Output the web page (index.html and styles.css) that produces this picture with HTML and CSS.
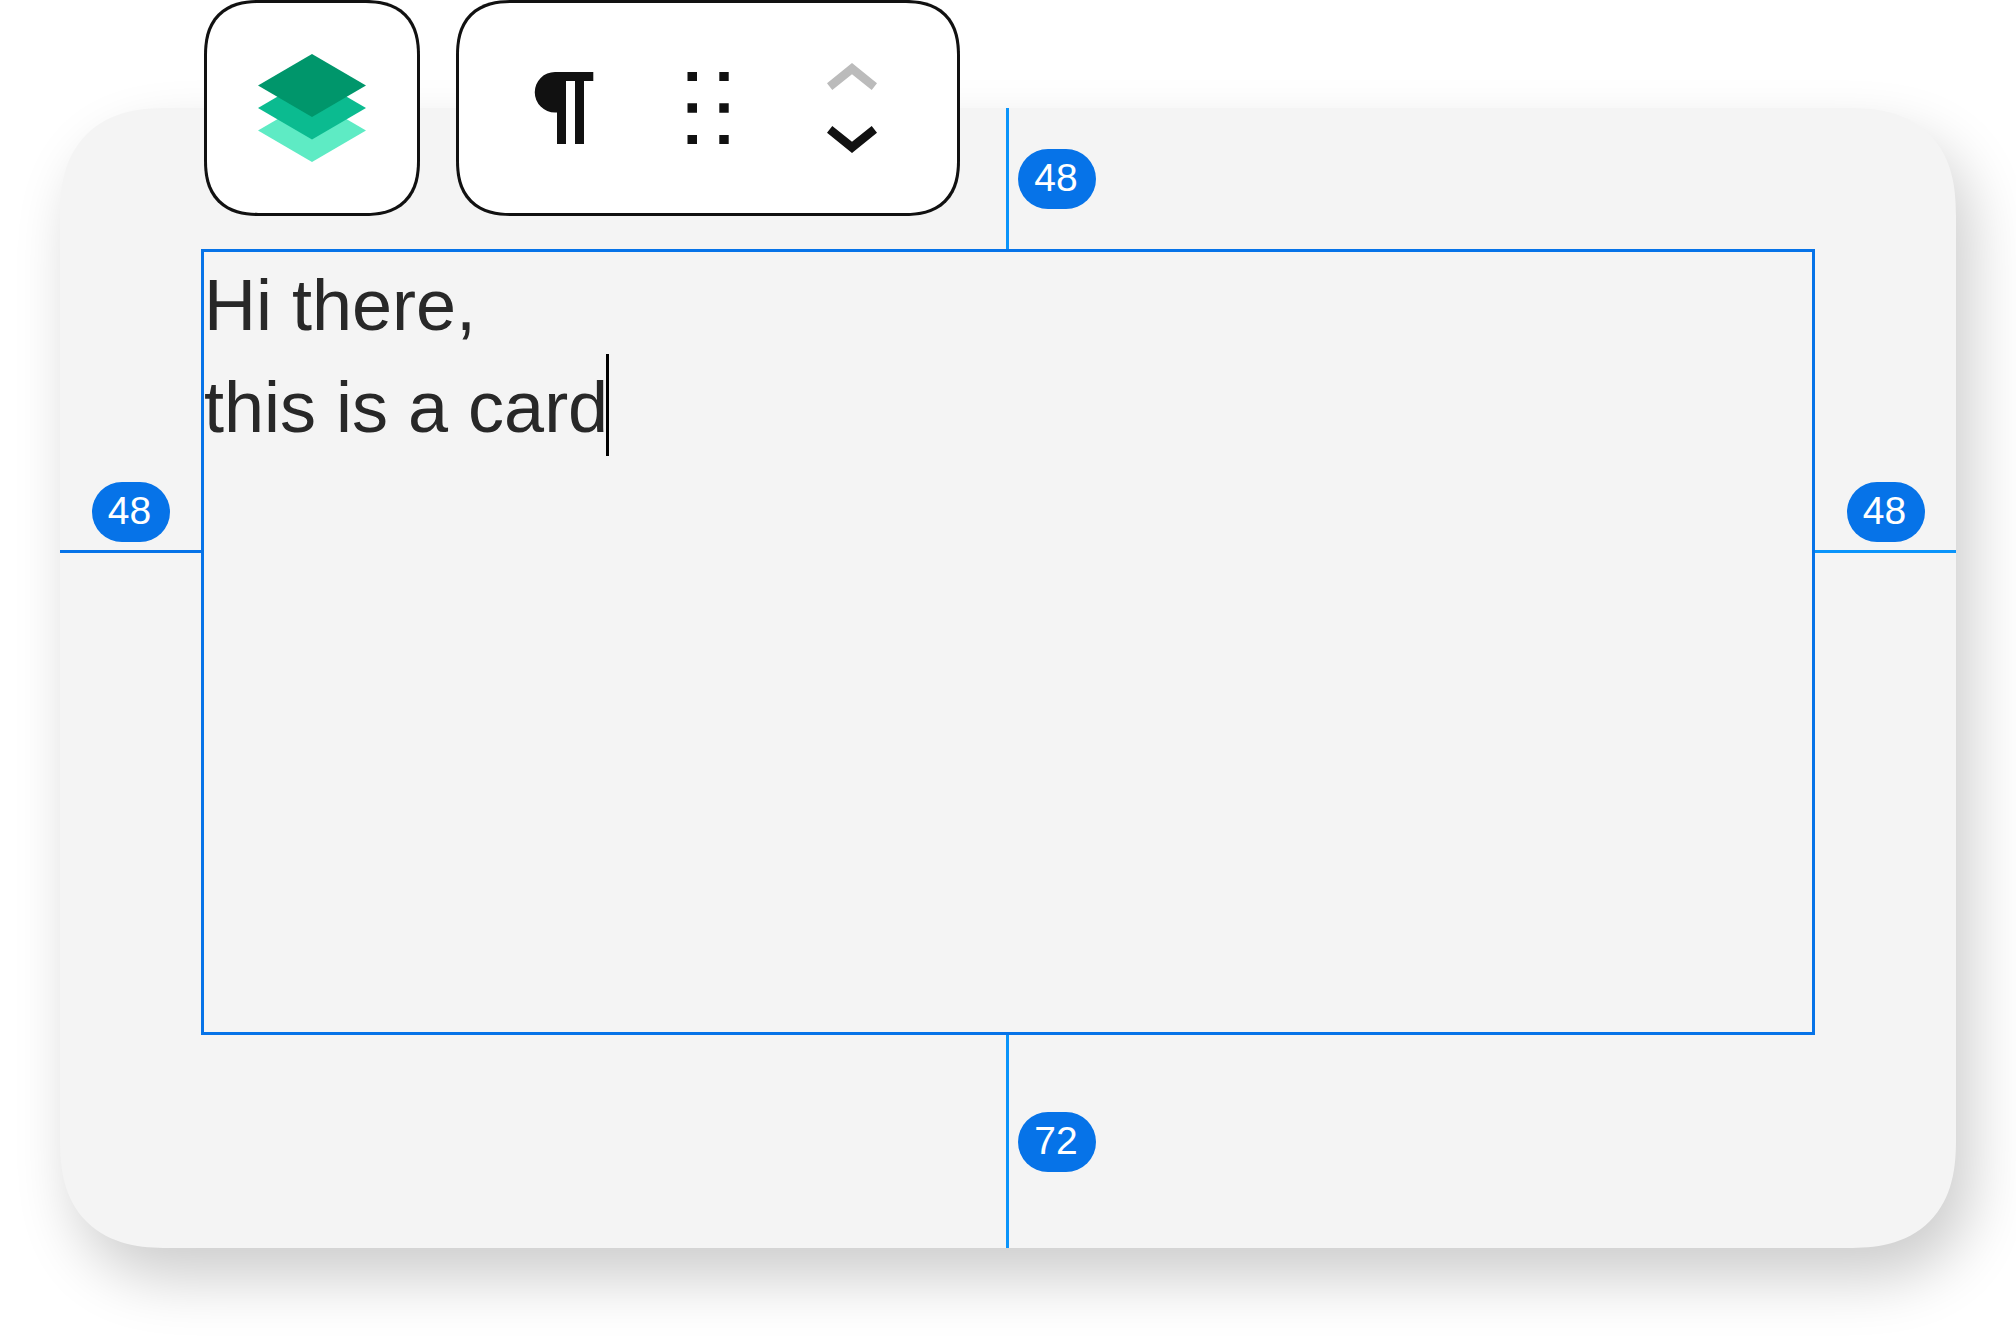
FILE: index.html
```html
<!DOCTYPE html>
<html lang="en">
<head>
    <meta charset="UTF-8">
    <meta name="viewport" content="width=device-width, initial-scale=1.0">
    <title>Card block</title>
    <link rel="stylesheet" href="styles.css">
</head>
<body>
    <div class="toolbar" role="toolbar" aria-label="Block tools">
        <div class="toolbar-group">
            <button class="tool-button tool-parent" type="button" aria-label="Select parent block">
                <svg width="108" height="108" viewBox="0 0 108 108">
                    <path fill="#5eebc4" d="M54 45l54 31.500-54 31.500L0 76.500z"></path>
                    <path fill="#0bbb90" d="M54 22.500l54 31.500-54 31.500L0 54z"></path>
                    <path fill="#00966b" d="M54 0l54 31.500L54 63 0 31.500z"></path>
                </svg>
            </button>
        </div>
        <div class="toolbar-group toolbar-group-wide">
            <button class="tool-button" type="button" aria-label="Paragraph">
                <svg width="108" height="108" viewBox="0 0 108 108" fill="currentColor">
                    <path d="M45 18h38.300v9H74v63h-9V27h-9v63h-9V58.500h-2a20.250 20.250 0 0 1 0-40.500z"></path>
                </svg>
            </button>
            <button class="tool-button" type="button" aria-label="Drag">
                <svg width="108" height="108" viewBox="0 0 108 108" fill="currentColor">
                    <path d="M33.500 18H43v9h-9.500zM65.300 18h9.400v9h-9.400zM33.500 49.300H43v9.400h-9.500zM65.300 49.300h9.400v9.400h-9.400zM33.500 81H43v9h-9.500zM65.300 81h9.400v9h-9.400z"></path>
                </svg>
            </button>
            <div class="mover">
                <button class="mover-button" type="button" aria-label="Move up" disabled>
                    <svg width="50" height="27" viewBox="0 0 50 27" fill="currentColor">
                        <path d="M25 0L0 20.300 5.300 27 25 11.300 44.700 27 50 20.300z"></path>
                    </svg>
                </button>
                <button class="mover-button" type="button" aria-label="Move down">
                    <svg width="50" height="27" viewBox="0 0 50 27" fill="currentColor">
                        <path d="M25 27L0 6.700 5.300 0 25 15.700 44.700 0 50 6.700z"></path>
                    </svg>
                </button>
            </div>
        </div>
    </div>

    <main class="card">
        <div class="spacing spacing-top">
            <span class="line"></span>
            <span class="badge">48</span>
        </div>
        <div class="spacing spacing-left">
            <span class="badge">48</span>
            <span class="line"></span>
        </div>
        <div class="editor" contenteditable="true" role="textbox" aria-multiline="true" aria-label="Card text" spellcheck="false">Hi there,<br>this is a card<span class="caret"></span></div>
        <div class="spacing spacing-right">
            <span class="badge">48</span>
            <span class="line"></span>
        </div>
        <div class="spacing spacing-bottom">
            <span class="line"></span>
            <span class="badge">72</span>
        </div>
    </main>
</body>
</html>
```
FILE: styles.css
```css
:root {
    --ink: #111111;
    --text-color: #282828;
    --card-bg: #f4f4f4;
    --outline: #0673e8;
    --line: #0a94fa;
}

* {
    box-sizing: border-box;
}

body {
    min-height: 100vh;
    margin: 0;
    padding-bottom: 96px;
    overflow-x: hidden;
    background: #ffffff;
    color: var(--text-color);
    font-family: "Liberation Sans", Arial, sans-serif;
}

/* Toolbar, hangs over the top edge of the card */
.toolbar {
    position: relative;
    z-index: 1;
    display: flex;
    gap: 36px;
    margin: 0 204px -108px;
}

.toolbar-group {
    display: flex;
    align-items: center;
    height: 216px;
    background: #ffffff;
    border: 3px solid var(--ink);
    border-radius: 56px;
    corner-shape: superellipse(1.3);
}

.toolbar-group-wide {
    padding: 0 33px;
}

.tool-button,
.mover-button {
    display: flex;
    align-items: center;
    justify-content: center;
    padding: 0;
    border: none;
    background: none;
    color: var(--ink);
    cursor: pointer;
}

.tool-button {
    width: 144px;
    height: 144px;
}

.tool-parent {
    width: 210px;
}

.mover {
    display: flex;
    flex-direction: column;
}

.mover-button {
    width: 144px;
    height: 63px;
}

.mover-button:disabled {
    color: #bbbbbb;
    cursor: default;
}

/* Card */
.card {
    display: grid;
    grid-template-columns: 141px 1fr 141px;
    grid-template-rows: 141px auto 213px;
    grid-template-areas:
        "top top top"
        "left editor right"
        "bottom bottom bottom";
    margin: 0 60px;
    background: var(--card-bg);
    border-radius: 108px;
    corner-shape: superellipse(1.3);
    box-shadow: 15px 30px 60px rgba(0, 0, 0, 0.2);
}

.editor {
    grid-area: editor;
    min-height: 786px;
    padding-top: 2px;
    border: 3px solid var(--outline);
    outline: none;
    font-size: 72px;
    line-height: 102px;
}

.caret {
    display: inline-block;
    width: 3px;
    height: 102px;
    margin: -2px 0 0 -2px;
    background: #000000;
    vertical-align: top;
}

/* Spacing guides */
.spacing {
    display: flex;
    align-items: center;
}

.spacing-top,
.spacing-bottom {
    gap: 9px;
    padding-left: calc(50% - 2px);
}

.spacing-top {
    grid-area: top;
}

.spacing-bottom {
    grid-area: bottom;
}

.spacing-left,
.spacing-right {
    flex-direction: column;
    gap: 8px;
    padding-top: 233px;
}

.spacing-left {
    grid-area: left;
}

.spacing-right {
    grid-area: right;
}

.line {
    align-self: stretch;
    flex: none;
    width: 3px;
    background: var(--line);
}

.spacing-left .line,
.spacing-right .line {
    width: auto;
    height: 3px;
}

.spacing-left .line {
    background: var(--outline);
}

.badge {
    width: 78px;
    height: 60px;
    padding-right: 2px;
    border-radius: 30px;
    background: var(--outline);
    color: #ffffff;
    font-size: 39px;
    line-height: 58px;
    text-align: center;
}
```
